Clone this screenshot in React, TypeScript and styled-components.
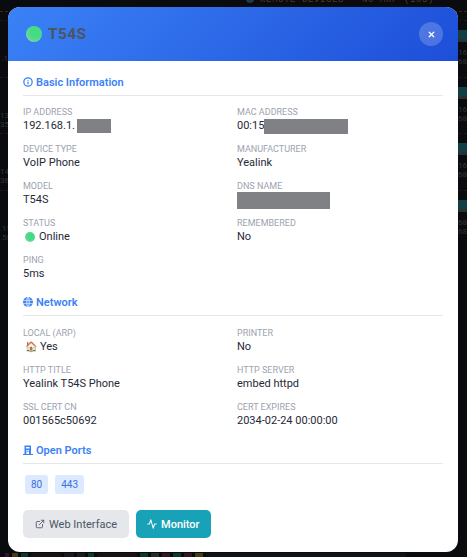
import React from "react";
import styled, { createGlobalStyle } from "styled-components";
import { ExternalLink, Activity, Info, X } from "lucide-react";

const Global = createGlobalStyle`
  html, body { margin: 0; padding: 0; height: 100%; }
  body { background: #0a0b0e; overflow: hidden; }
`;

const Backdrop = styled.div`
  position: relative;
  width: 467px;
  height: 557px;
  overflow: hidden;
  background: #0a0b0e;
  font-family: "Roboto", "Liberation Sans", sans-serif;
`;

const Behind = styled.div`
  position: absolute;
  inset: 0;
  display: flex;
  justify-content: space-between;
  padding-top: 20px;
`;

const TopBar = styled.div`
  position: absolute;
  left: 0;
  right: 0;
  top: 0;
  height: 11px;
  padding-left: 260px;
  border-bottom: 1px dashed #3a2a10;
  color: #4f3d1c;
  font: 9px/1px "Liberation Mono", monospace;
  letter-spacing: 0.6px;
  white-space: nowrap;
  overflow: hidden;

  &::before {
    content: "";
    position: absolute;
    left: 246px;
    top: -5px;
    width: 8px;
    height: 8px;
    border-radius: 50%;
    background: #1c3a4a;
  }
`;

const SideColumn = styled.div<{ $width: number; $right?: boolean }>`
  width: ${p => p.$width}px;
  overflow: hidden;
  display: flex;
  flex-direction: column;
  align-items: ${p => (p.$right ? "flex-start" : "flex-end")};
`;

const SideTile = styled.div`
  height: 56.5px;
  width: 100%;
  flex: none;
  border-top: 1px dashed #1a1a1c;
  box-sizing: border-box;
  font-size: 8px;
  line-height: 9px;
  color: #333335;
  white-space: nowrap;
`;

const SideThumb = styled.div`
  height: 9px;
  margin-top: 9px;
  background: #123e46;
  border-bottom: 3px solid #2b2e33;
`;

const SideText = styled.div<{ $pad: number; $right?: boolean }>`
  padding-top: ${p => p.$pad}px;
  text-align: ${p => (p.$right ? "left" : "right")};
`;

const BottomStrip = styled.div`
  position: absolute;
  left: 0;
  right: 0;
  bottom: 0;
  height: 4px;
  display: flex;
  padding-left: 5px;
  gap: 3px;
`;

const StripBlock = styled.span<{ $w: number; $c: string }>`
  width: ${p => p.$w}px;
  flex: none;
  background: ${p => p.$c};
`;

const Modal = styled.div`
  position: absolute;
  left: 8px;
  top: 7px;
  width: 450px;
  height: 545px;
  background: #fff;
  border-radius: 12px;
  overflow: hidden;
  display: flex;
  flex-direction: column;
`;

const Header = styled.header`
  height: 54px;
  flex: none;
  display: flex;
  align-items: center;
  justify-content: space-between;
  padding: 0 15px 0 18px;
  background: linear-gradient(135deg, #3b82f6, #1d4ed8);
`;

const Title = styled.h2`
  display: flex;
  align-items: center;
  gap: 6px;
  margin: 0;
  font-size: 15.5px;
  font-weight: 700;
  letter-spacing: 0.4px;
  color: #4b5563;
`;

const Dot = styled.span<{ $size: number }>`
  display: inline-block;
  flex: none;
  width: ${p => p.$size}px;
  height: ${p => p.$size}px;
  border-radius: 50%;
  background: radial-gradient(circle at 62% 38%, #38e07a, #4fd98a 50%, #a6d8b8 100%);
`;

const Close = styled.button`
  width: 24px;
  height: 24px;
  padding: 0;
  border: 0;
  border-radius: 50%;
  background: rgba(255, 255, 255, 0.2);
  color: #fff;
  display: flex;
  align-items: center;
  justify-content: center;
`;

const Body = styled.div`
  flex: 1;
  padding: 14px 15px 0;
  display: flex;
  flex-direction: column;
`;

const SectionTitle = styled.div`
  display: flex;
  align-items: center;
  gap: 3px;
  height: 14px;
  padding-bottom: 6px;
  border-bottom: 1px solid #e5e7eb;
  color: #3b82f6;
  font-size: 11px;
  font-weight: 600;
`;

const Grid = styled.div<{ $top: number; $bottom: number }>`
  display: grid;
  grid-template-columns: 214px 1fr;
  margin-top: ${p => p.$top}px;
  margin-bottom: ${p => p.$bottom}px;
  row-gap: 9px;
`;

const Field = styled.div`
  height: 28px;
  display: flex;
  flex-direction: column;
`;

const Label = styled.div`
  height: 12px;
  line-height: 12px;
  font-size: 9px;
  color: #9ca3af;
  text-transform: uppercase;
`;

const Value = styled.div`
  height: 16px;
  line-height: 16px;
  font-size: 11px;
  color: #1f2937;
  display: flex;
  align-items: center;
  gap: 4px;
  white-space: pre;
`;

const Redact = styled.span<{ $w: number; $h: number }>`
  display: block;
  flex: none;
  width: ${p => p.$w}px;
  height: ${p => p.$h}px;
  background: #808185;
`;

const Emoji = styled.span`
  font-size: 10px;
  margin-left: 2px;
  margin-right: -1px;
`;

const Ports = styled.div`
  display: flex;
  gap: 7px;
  padding: 11px 2px 16px;
`;

const Port = styled.span`
  height: 19px;
  padding: 0 6px;
  display: flex;
  align-items: center;
  border-radius: 3px;
  background: #dbeafe;
  color: #3b6fe0;
  font-size: 10px;
`;

const Actions = styled.div`
  display: flex;
  gap: 7px;
`;

const Action = styled.button<{ $primary?: boolean }>`
  height: 28px;
  padding: 0 ${p => (p.$primary ? 11 : 12)}px;
  border: 0;
  border-radius: 5px;
  display: flex;
  align-items: center;
  gap: 4px;
  font-family: inherit;
  font-size: 11px;
  font-weight: ${p => (p.$primary ? 500 : 400)};
  background: ${p => (p.$primary ? "#17a2b8" : "#e5e7eb")};
  color: ${p => (p.$primary ? "#fff" : "#4b5563")};
`;

const GlobeIcon = () => (
  <svg width="10" height="10" viewBox="0 0 10 10">
    <circle cx="5" cy="5" r="5" fill="#3b82f6" />
    <path d="M0 3.4h10M0 6.6h10M5 0v10M5 0C2.8 2 2.8 8 5 10M5 0c2.2 2 2.2 8 0 10" stroke="#fff" strokeWidth="0.6" fill="none" />
  </svg>
);

const PortsIcon = () => (
  <svg width="10" height="10" viewBox="0 0 10 10" fill="#3b82f6">
    <path d="M1.5 0.5h6.5v8.5H1.5zM3 2v1.6h3.5V2zM3.4 5v4H6V5z" fillRule="evenodd" />
    <rect x="0" y="9" width="10" height="1" />
    <rect x="4" y="5.8" width="1.6" height="1" />
  </svg>
);

type Row = { label: string; value: React.ReactNode };

const basic: Row[] = [
  { label: "IP Address", value: <>192.168.1.<Redact $w={34} $h={14} style={{ marginLeft: -2 }} /></> },
  { label: "MAC Address", value: <>00:15<Redact $w={84} $h={15} style={{ marginLeft: -4 }} /></> },
  { label: "Device Type", value: "VoIP Phone" },
  { label: "Manufacturer", value: "Yealink" },
  { label: "Model", value: "T54S" },
  { label: "DNS Name", value: <Redact $w={93} $h={17} /> },
  { label: "Status", value: <><Dot $size={10} style={{ marginLeft: 2 }} />{" "}Online</> },
  { label: "Remembered", value: "No" },
  { label: "Ping", value: "5ms" },
];

const network: Row[] = [
  { label: "Local (ARP)", value: <><Emoji>🏠</Emoji>Yes</> },
  { label: "Printer", value: "No" },
  { label: "HTTP Title", value: "Yealink T54S Phone" },
  { label: "HTTP Server", value: "embed httpd" },
  { label: "SSL Cert CN", value: "001565c50692" },
  { label: "Cert Expires", value: "2034-02-24 00:00:00" },
];

const leftTiles = [[".1", ""], ["13", "35"], ["14", "36"], [".15", ".58"]];
const strip: [number, string][] = [
  [4, "#3a1226"], [6, "#4a3a10"], [7, "#0c3a2a"], [30, "#1a1016"], [10, "#1f1620"],
  [8, "#1c1c20"], [6, "#0c3a2a"], [40, "#1a1016"], [8, "#0c3a2a"], [8, "#2a2a2c"],
  [8, "#3a1226"], [8, "#0c3a2a"], [8, "#3a1226"], [8, "#4a3a10"], [200, "#0b1416"],
];

function Fields({ rows, top, bottom }: { rows: Row[]; top: number; bottom: number }) {
  return (
    <Grid $top={top} $bottom={bottom}>
      {rows.map(r => (
        <Field key={r.label}>
          <Label>{r.label}</Label>
          <Value>{r.value}</Value>
        </Field>
      ))}
    </Grid>
  );
}

export default function App() {
  return (
    <Backdrop>
      <Global />
      <TopBar>REMOTE DEVICES - NO ARP (103)</TopBar>
      <Behind>
        <SideColumn $width={8}>
          {leftTiles.map(t => (
            <SideTile key={t[0]}>
              <SideText $pad={33}>{t[0]}<br />{t[1]}</SideText>
            </SideTile>
          ))}
        </SideColumn>
        <SideColumn $width={9} $right>
          {["168", "168", "168", "68"].map((t, i) => (
            <SideTile key={i}>
              <SideThumb />
              <SideText $pad={6} $right>{t}<br />68</SideText>
            </SideTile>
          ))}
        </SideColumn>
      </Behind>
      <BottomStrip>
        {strip.map(([w, c], i) => <StripBlock key={i} $w={w} $c={c} />)}
      </BottomStrip>
      <Modal>
        <Header>
          <Title><Dot $size={16} /> T54S</Title>
          <Close><X size={9} strokeWidth={3.5} /></Close>
        </Header>
        <Body>
          <SectionTitle><Info size={10} strokeWidth={3} /> Basic Information</SectionTitle>
          <Fields rows={basic} top={10} bottom={13} />
          <SectionTitle><GlobeIcon /> Network</SectionTitle>
          <Fields rows={network} top={11} bottom={14} />
          <SectionTitle><PortsIcon /> Open Ports</SectionTitle>
          <Ports>
            <Port>80</Port>
            <Port>443</Port>
          </Ports>
          <Actions>
            <Action><ExternalLink size={10} /> Web Interface</Action>
            <Action $primary><Activity size={10} strokeWidth={2.5} /> Monitor</Action>
          </Actions>
        </Body>
      </Modal>
    </Backdrop>
  );
}
